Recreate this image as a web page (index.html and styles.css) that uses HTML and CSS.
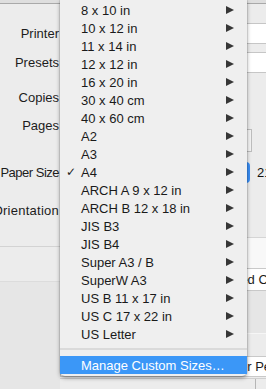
FILE: index.html
```html
<!DOCTYPE html>
<html>
<head>
<meta charset="utf-8">
<link rel="stylesheet" href="styles.css">
</head>
<body>
<div class="window">
  <div class="toolbar"></div>
  <div class="form">
    <div class="row row-printer"><div class="label">Printer</div><div class="ctl"><div class="popup"></div></div></div>
    <div class="row row-presets"><div class="label">Presets</div><div class="ctl"><div class="popup"></div></div></div>
    <div class="row row-copies"><div class="label">Copies</div><div class="ctl"></div></div>
    <div class="row row-pages"><div class="label">Pages</div><div class="ctl ctl-pages"><div class="field"></div></div></div>
    <div class="row row-paper"><div class="label label-tight">Paper Size</div><div class="ctl ctl-paper"><div class="popup popup-paper"><span class="stepper"></span></div><span class="dims">21.00 by 29.70 cm</span></div></div>
    <div class="row row-orient"><div class="label label-wide">Orientation</div><div class="ctl"></div></div>
  </div>
  <div class="lower">
    <div class="lower-left">
      <div class="pane-a"></div>
      <div class="pane-b"></div>
    </div>
    <div class="lower-right">
      <div class="pane-white">
        <div class="box box-1"><span>Hide Scaled Content</span></div>
      </div>
      <div class="pane-grey"></div>
      <div class="pane-light">
        <div class="box box-2"><span>Paper Per Sheet</span></div>
      </div>
      <div class="pane-foot"><span class="vline"></span></div>
    </div>
  </div>

  <div class="menu">
    <div class="item"><span class="check"></span><span class="text">8 x 10 in</span><span class="arrow"></span></div>
    <div class="item"><span class="check"></span><span class="text">10 x 12 in</span><span class="arrow"></span></div>
    <div class="item"><span class="check"></span><span class="text">11 x 14 in</span><span class="arrow"></span></div>
    <div class="item"><span class="check"></span><span class="text">12 x 12 in</span><span class="arrow"></span></div>
    <div class="item"><span class="check"></span><span class="text">16 x 20 in</span><span class="arrow"></span></div>
    <div class="item"><span class="check"></span><span class="text">30 x 40 cm</span><span class="arrow"></span></div>
    <div class="item"><span class="check"></span><span class="text">40 x 60 cm</span><span class="arrow"></span></div>
    <div class="item"><span class="check"></span><span class="text">A2</span><span class="arrow"></span></div>
    <div class="item"><span class="check"></span><span class="text">A3</span><span class="arrow"></span></div>
    <div class="item"><span class="check">✓</span><span class="text">A4</span><span class="arrow"></span></div>
    <div class="item"><span class="check"></span><span class="text">ARCH A 9 x 12 in</span><span class="arrow"></span></div>
    <div class="item"><span class="check"></span><span class="text">ARCH B 12 x 18 in</span><span class="arrow"></span></div>
    <div class="item"><span class="check"></span><span class="text">JIS B3</span><span class="arrow"></span></div>
    <div class="item"><span class="check"></span><span class="text">JIS B4</span><span class="arrow"></span></div>
    <div class="item"><span class="check"></span><span class="text">Super A3 / B</span><span class="arrow"></span></div>
    <div class="item"><span class="check"></span><span class="text">SuperW A3</span><span class="arrow"></span></div>
    <div class="item"><span class="check"></span><span class="text">US B 11 x 17 in</span><span class="arrow"></span></div>
    <div class="item"><span class="check"></span><span class="text">US C 17 x 22 in</span><span class="arrow"></span></div>
    <div class="item"><span class="check"></span><span class="text">US Letter</span><span class="arrow"></span></div>
    <div class="separator"></div>
    <div class="item item-selected"><span class="check"></span><span class="text">Manage Custom Sizes…</span></div>
  </div>
</div>
</body>
</html>
```

FILE: styles.css
```css
html, body {
  margin: 0;
  padding: 0;
}
body {
  width: 266px;
  height: 389px;
  overflow: hidden;
  background: #ececec;
  font-family: "Liberation Sans", Arial, sans-serif;
  font-size: 13px;
  color: #1c1c1c;
}
.window {
  position: relative;
  width: 266px;
  height: 389px;
  overflow: hidden;
}
.toolbar {
  height: 3px;
  background: #dedede;
  border-bottom: 1px solid #a9a9a9;
}
.form {
  display: flex;
  flex-direction: column;
}
.row {
  display: grid;
  grid-template-columns: 59px 1fr;
  column-gap: 7px;
  height: 21px;
}
.label {
  line-height: 21px;
  white-space: nowrap;
  display: flex;
  justify-content: flex-end;
  align-items: center;
  min-width: 0;
}
.label-tight {
  letter-spacing: -0.5px;
}
.label-wide {
  letter-spacing: 0.25px;
}
.ctl {
  display: flex;
  align-items: stretch;
  min-width: 0;
}
.row-printer { margin-top: 19px; }
.row-presets { margin-top: 8px; }
.row-copies { margin-top: 14px; }
.row-pages { margin-top: 7px; height: 37px; }
.row-pages .label { align-items: flex-start; }
.row-paper { margin-top: 10px; }
.row-orient { margin-top: 17px; }

.popup {
  flex: 0 0 240px;
  box-sizing: border-box;
  height: 21px;
  background: #ffffff;
  border: 1px solid #c6c6c6;
  border-radius: 4px;
}
.ctl-pages {
  flex-direction: column;
  justify-content: flex-end;
}
.field {
  width: 186px;
  height: 23px;
  box-sizing: border-box;
  border: 1px solid #bdbdbd;
  background: #f3f3f3;
}
.ctl-paper {
  align-items: center;
  gap: 7px;
  white-space: nowrap;
}
.popup-paper {
  flex: 0 0 184px;
  display: flex;
  justify-content: flex-end;
  border: none;
  background: #fafafa;
}
.stepper {
  width: 18px;
  height: 21px;
  background: #3a8ff6;
  border-radius: 0 4px 4px 0;
}
.dims {
  color: #111;
}

.lower {
  display: flex;
  align-items: flex-start;
}
.lower-left {
  width: 60px;
  flex: 0 0 60px;
  display: flex;
  flex-direction: column;
}
.pane-a {
  margin-top: 25px;
  height: 34px;
  border-top: 1px solid #d3d3d3;
  background: #ececec;
}
.pane-b {
  height: 120px;
  border-top: 1px solid #dcdcdc;
  background: #e6e6e6;
}
.lower-right {
  flex: 1;
  display: flex;
  flex-direction: column;
  min-width: 0;
}
.pane-white {
  margin-top: 16px;
  border-top: 1px solid #d5d5d5;
  background: #f8f8f8;
  height: 54px;
  box-sizing: border-box;
  display: flex;
  flex-direction: column;
  justify-content: flex-end;
}
.box {
  box-sizing: border-box;
  height: 23px;
  border: 1px solid #c9c9c9;
  background: #ffffff;
  display: flex;
  align-items: center;
  justify-content: flex-end;
  white-space: nowrap;
  overflow: hidden;
  margin-right: -60px;
}
.box-1 { width: 260px; }
.box-1 span { margin-right: 15px; }
.pane-grey {
  height: 42px;
  background: #e6e6e6;
}
.pane-light {
  height: 45px;
  border-top: 1px solid #f6f6f6;
  background: #ececec;
  display: flex;
  flex-direction: column;
  justify-content: flex-end;
  padding-bottom: 1px;
  box-sizing: border-box;
}
.box-2 { width: 260px; height: 21px; }
.box-2 span { margin-right: 6px; }
.pane-foot {
  height: 12px;
  border-top: 1px solid #d0d0d0;
  display: flex;
  justify-content: flex-end;
}
.vline {
  width: 1px;
  height: 12px;
  background: #b5b5b5;
  margin-right: 10px;
}

/* pop-up menu */
.menu {
  position: absolute;
  left: 60px;
  top: 0;
  width: 187px;
  padding: 1px 0 2px;
  background: #efefef;
  border-radius: 0 0 5px 5px;
  box-shadow: 0 0 0 1px rgba(0,0,0,0.08), 0 2px 4px rgba(0,0,0,0.35);
}
.item {
  display: flex;
  align-items: center;
  height: 18px;
  padding: 0 13px 0 6px;
  color: #1a1a1a;
  white-space: nowrap;
}
.check {
  flex: 0 0 15px;
  font-family: "DejaVu Sans", sans-serif;
  font-size: 12px;
  color: #222;
}
.text {
  flex: 1;
}
.arrow {
  width: 0;
  height: 0;
  border-left: 8px solid #363636;
  border-top: 4.5px solid transparent;
  border-bottom: 4.5px solid transparent;
}
.separator {
  height: 2px;
  background: #dadada;
  margin: 5px 0 6px;
}
.item-selected {
  background: #3b97f7;
  color: #ffffff;
}
```
